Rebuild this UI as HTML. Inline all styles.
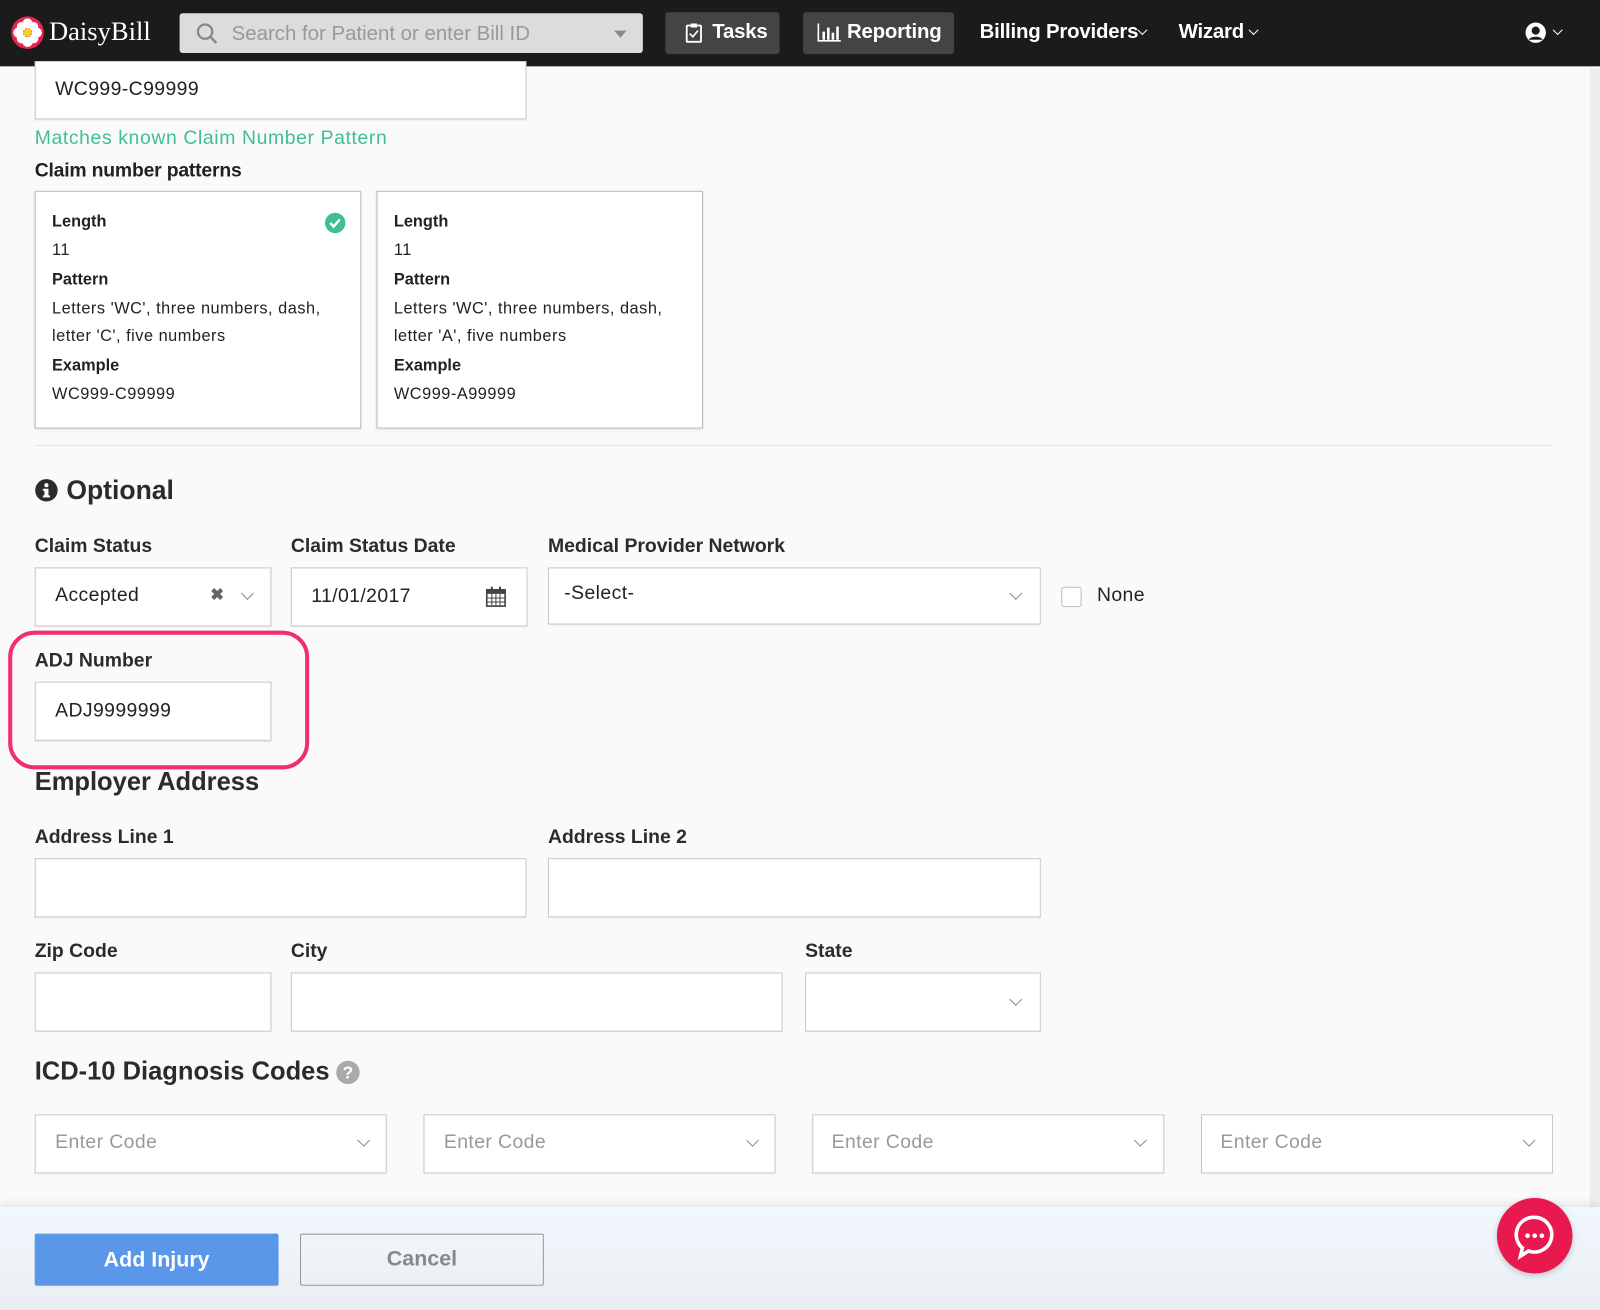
<!DOCTYPE html>
<html><head><meta charset="utf-8"><style>
html,body{margin:0;padding:0;width:1600px;height:1310px;overflow:hidden;background:#fafafa}
#w{position:absolute;left:0;top:0;width:1568px;height:1284px;transform:scale(1.020408);transform-origin:0 0;font-family:"Liberation Sans",sans-serif;color:#222}
.a{position:absolute}
.inp{position:absolute;background:#fff;border:1px solid #c8c8c8;box-sizing:border-box;box-shadow:0 1px 1px rgba(0,0,0,.08)}
.lbl{position:absolute;font-size:19px;font-weight:bold;color:#2b2b2b}
.t{position:absolute;font-size:19px;color:#222;letter-spacing:.4px}
.card{position:absolute;top:187px;width:320px;height:233px;background:#fff;border:1px solid #bbb;box-sizing:border-box;box-shadow:0 1px 3px rgba(0,0,0,.15);font-size:16px;line-height:27.5px;padding:15px 16px;letter-spacing:.5px}
.card b{display:block;line-height:29px;letter-spacing:0}
.chev{position:absolute;width:8px;height:8px;border-right:1.5px solid #888;border-bottom:1.5px solid #888;transform:rotate(45deg)}
.nav{position:absolute;color:#fff;font-size:20px;top:20px;font-weight:bold;letter-spacing:-.2px}
.h{position:absolute;font-size:25px;color:#2b2b2b;font-weight:bold}
</style></head><body><div id="w">
<div class="a" style="left:0;top:0;width:1568px;height:65px;background:#1b1b1b"></div>
<svg class="a" style="left:10px;top:15px" width="34" height="34" viewBox="0 0 34 34"><circle cx="17" cy="17" r="16" fill="#e8254d"/><g fill="#fff"><circle cx="17" cy="8" r="5"/><circle cx="17" cy="26" r="5"/><circle cx="8" cy="17" r="5"/><circle cx="26" cy="17" r="5"/><circle cx="11" cy="11" r="4.5"/><circle cx="23" cy="11" r="4.5"/><circle cx="11" cy="23" r="4.5"/><circle cx="23" cy="23" r="4.5"/></g><circle cx="17" cy="17" r="4" fill="#f3d21c"/></svg>
<div class="a" style="left:48px;top:16px;color:#fff;font-family:'Liberation Serif',serif;font-size:26px">DaisyBill</div>
<div class="a" style="left:176px;top:13px;width:454px;height:39px;background:#dcdcdc;border-radius:3px"></div>
<svg class="a" style="left:192px;top:22px" width="22" height="22"><circle cx="9" cy="9" r="7" fill="none" stroke="#888" stroke-width="2.2"/><line x1="14" y1="14" x2="20" y2="20" stroke="#888" stroke-width="2.5"/></svg>
<div class="a" style="left:227px;top:22px;color:#999;font-size:20px">Search for Patient or enter Bill ID</div>
<div class="a" style="left:602px;top:30px;border-left:6px solid transparent;border-right:6px solid transparent;border-top:7px solid #888"></div>
<div class="a" style="left:652px;top:12px;width:112px;height:41px;background:#444;border-radius:3px"></div>
<svg class="a" style="left:671px;top:22px" width="18" height="21"><rect x="2" y="3" width="14" height="16" rx="1" fill="none" stroke="#fff" stroke-width="1.8"/><rect x="6" y="1" width="6" height="4" fill="#fff"/><path d="M5 11l3 3 5-6" fill="none" stroke="#fff" stroke-width="1.6"/></svg>
<div class="nav" style="left:698px">Tasks</div>
<div class="a" style="left:787px;top:12px;width:148px;height:41px;background:#444;border-radius:3px"></div>
<svg class="a" style="left:801px;top:22px" width="24" height="20"><path d="M1 1v17h22" fill="none" stroke="#fff" stroke-width="1.6"/><rect x="5" y="9" width="2.5" height="8" fill="#fff"/><rect x="9.5" y="5" width="2.5" height="12" fill="#fff"/><rect x="14" y="10" width="2.5" height="7" fill="#fff"/><rect x="18.5" y="4" width="2.5" height="13" fill="#fff"/></svg>
<div class="nav" style="left:830px">Reporting</div>
<div class="nav" style="left:960px">Billing Providers</div>
<div class="chev" style="left:1116px;top:26px;border-color:#fff;width:6px;height:6px"></div>
<div class="nav" style="left:1155px">Wizard</div>
<div class="chev" style="left:1225px;top:26px;border-color:#fff;width:6px;height:6px"></div>
<svg class="a" style="left:1494px;top:21px" width="22" height="22"><circle cx="11" cy="11" r="10" fill="#fff"/><circle cx="11" cy="9" r="4" fill="#1b1b1b"/><path d="M4 18c2-4 12-4 14 0" fill="#1b1b1b"/></svg>
<div class="chev" style="left:1523px;top:26px;border-color:#fff;width:6px;height:6px"></div>
<div class="a" style="left:1558px;top:67px;width:10px;height:1120px;background:#eee"></div>

<div class="inp" style="left:34px;top:60px;width:482px;height:57px;border-top:none"></div>
<div class="t" style="left:54px;top:77px">WC999-C99999</div>
<div class="a" style="left:34px;top:125px;font-size:19px;color:#3fc08e;letter-spacing:.6px">Matches known Claim Number Pattern</div>
<div class="a" style="left:34px;top:157px;font-size:19px;color:#222;font-weight:bold;letter-spacing:-.2px">Claim number patterns</div>
<div class="card" style="left:34px"><b>Length</b>11<b>Pattern</b>Letters 'WC', three numbers, dash, letter 'C', five numbers<b>Example</b>WC999-C99999</div>
<svg class="a" style="left:318px;top:208px" width="21" height="21"><circle cx="10.5" cy="10.5" r="10" fill="#3fc08e"/><path d="M5.5 10.5l3.5 3.5 6-7" fill="none" stroke="#fff" stroke-width="2.4"/></svg>
<div class="card" style="left:369px"><b>Length</b>11<b>Pattern</b>Letters 'WC', three numbers, dash, letter 'A', five numbers<b>Example</b>WC999-A99999</div>
<div class="a" style="left:34px;top:436px;width:1488px;height:1px;background:#e3e3e3"></div>
<svg class="a" style="left:34px;top:469px" width="23" height="23"><circle cx="11.5" cy="11.5" r="11" fill="#2b2b2b"/><rect x="9.5" y="10" width="4" height="8" fill="#fff"/><rect x="8" y="10" width="3" height="2" fill="#fff"/><rect x="8" y="16.5" width="7" height="2" fill="#fff"/><circle cx="11.5" cy="6.5" r="2" fill="#fff"/></svg>
<div class="h" style="left:65px;top:465px;font-size:26px">Optional</div>

<div class="lbl" style="left:34px;top:525px">Claim Status</div>
<div class="lbl" style="left:285px;top:525px">Claim Status Date</div>
<div class="lbl" style="left:537px;top:525px">Medical Provider Network</div>
<div class="inp" style="left:34px;top:556px;width:232px;height:58px"></div>
<div class="t" style="left:54px;top:573px">Accepted</div>
<div class="a" style="left:206px;top:573px;font-size:16px;color:#666;font-weight:bold">✖</div>
<div class="chev" style="left:238px;top:577px"></div>
<div class="inp" style="left:285px;top:556px;width:232px;height:58px"></div>
<div class="t" style="left:305px;top:574px">11/01/2017</div>
<svg class="a" style="left:476px;top:574px" width="20" height="21"><rect x="1" y="4" width="18" height="16" fill="none" stroke="#444" stroke-width="1.6"/><rect x="1" y="4" width="18" height="4" fill="#444"/><rect x="5" y="1" width="2" height="5" fill="#444"/><rect x="13" y="1" width="2" height="5" fill="#444"/><path d="M1 12h18M1 16h18M6 8v12M10 8v12M14 8v12" stroke="#444" stroke-width="1"/></svg>
<div class="inp" style="left:537px;top:556px;width:483px;height:56px"></div>
<div class="t" style="left:553px;top:571px">-Select-</div>
<div class="chev" style="left:991px;top:577px"></div>
<div class="a" style="left:1040px;top:575px;width:18px;height:18px;border:1.5px solid #bbb;border-radius:3px;background:#fff"></div>
<div class="t" style="left:1075px;top:573px">None</div>

<div class="a" style="left:8px;top:618px;width:287px;height:128px;border:4px solid #f0306a;border-radius:26px"></div>
<div class="lbl" style="left:34px;top:637px">ADJ Number</div>
<div class="inp" style="left:34px;top:668px;width:232px;height:58px"></div>
<div class="t" style="left:54px;top:686px">ADJ9999999</div>

<div class="h" style="left:34px;top:752px">Employer Address</div>
<div class="lbl" style="left:34px;top:810px">Address Line 1</div>
<div class="lbl" style="left:537px;top:810px">Address Line 2</div>
<div class="inp" style="left:34px;top:841px;width:482px;height:58px"></div>
<div class="inp" style="left:537px;top:841px;width:483px;height:58px"></div>
<div class="lbl" style="left:34px;top:922px">Zip Code</div>
<div class="lbl" style="left:285px;top:922px">City</div>
<div class="lbl" style="left:789px;top:922px">State</div>
<div class="inp" style="left:34px;top:953px;width:232px;height:58px"></div>
<div class="inp" style="left:285px;top:953px;width:482px;height:58px"></div>
<div class="inp" style="left:789px;top:953px;width:231px;height:58px"></div>
<div class="chev" style="left:991px;top:975px"></div>

<div class="h" style="left:34px;top:1036px">ICD-10 Diagnosis Codes</div>
<svg class="a" style="left:329px;top:1039px" width="24" height="24"><circle cx="12" cy="12" r="11.5" fill="#aaa"/><text x="12" y="18" font-size="17" font-weight="bold" fill="#fff" text-anchor="middle" font-family="Liberation Sans">?</text></svg>
<div class="inp" style="left:34px;top:1092px;width:345px;height:58px"></div>
<div class="inp" style="left:415px;top:1092px;width:345px;height:58px"></div>
<div class="inp" style="left:796px;top:1092px;width:345px;height:58px"></div>
<div class="inp" style="left:1177px;top:1092px;width:345px;height:58px"></div>
<div class="t" style="left:54px;top:1109px;color:#999">Enter Code</div>
<div class="t" style="left:435px;top:1109px;color:#999">Enter Code</div>
<div class="t" style="left:815px;top:1109px;color:#999">Enter Code</div>
<div class="t" style="left:1196px;top:1109px;color:#999">Enter Code</div>
<div class="chev" style="left:352px;top:1113px"></div>
<div class="chev" style="left:733px;top:1113px"></div>
<div class="chev" style="left:1113px;top:1113px"></div>
<div class="chev" style="left:1494px;top:1113px"></div>

<div class="a" style="left:0;top:1183px;width:1568px;height:101px;background:linear-gradient(#f1f8fd,#e9eef2);box-shadow:0 -4px 8px rgba(0,0,0,.08)"></div>
<div class="a" style="left:34px;top:1209px;width:239px;height:51px;background:#5b97e8;border-radius:2px;color:#fff;font-size:21px;text-align:center;line-height:51px;font-weight:bold">Add Injury</div>
<div class="a" style="left:294px;top:1209px;width:239px;height:51px;box-sizing:border-box;border:1.5px solid #999;border-radius:2px;color:#888;font-size:21px;text-align:center;line-height:48px;font-weight:bold">Cancel</div>
<div class="a" style="left:1467px;top:1174px;width:74px;height:74px;border-radius:50%;background:#e8194f;box-shadow:0 2px 6px rgba(0,0,0,.2)"></div>
<svg class="a" style="left:1480px;top:1187px" width="48" height="48"><path d="M24 6a17 17 0 1 1-6 33l-8 5 2-8A17 17 0 0 1 24 6z" fill="none" stroke="#fff" stroke-width="3.5"/><circle cx="17" cy="24" r="2.3" fill="#fff"/><circle cx="24" cy="24" r="2.3" fill="#fff"/><circle cx="31" cy="24" r="2.3" fill="#fff"/></svg>
</div></body></html>
